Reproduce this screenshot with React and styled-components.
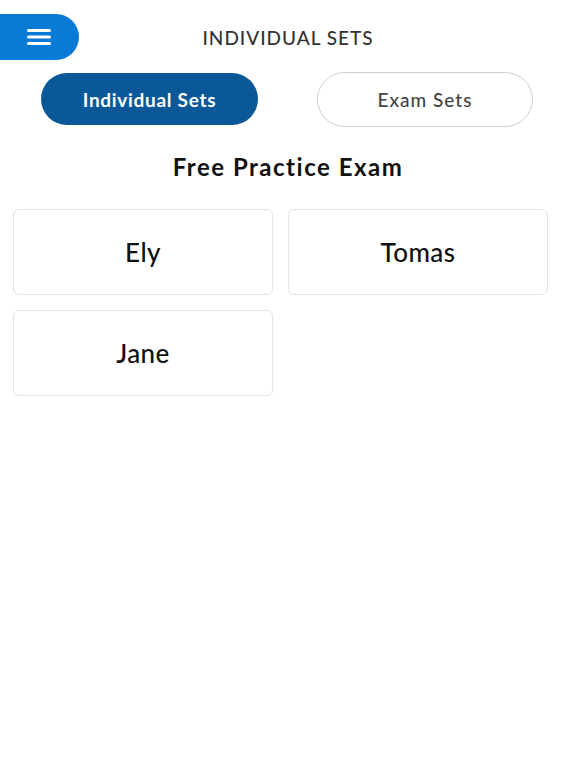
import React from "react";
import styled, { createGlobalStyle } from "styled-components";

const GlobalStyle = createGlobalStyle`
  html, body { margin: 0; padding: 0; background: #ffffff; }
  body { font-family: Lato, "Noto Sans", "Liberation Sans", sans-serif; -webkit-font-smoothing: antialiased; }
  * { box-sizing: border-box; }
`;

const Page = styled.div`
  width: 576px;
  min-height: 768px;
  background: #fff;
  display: flex;
  flex-direction: column;
`;

const TopBar = styled.header`
  display: grid;
  grid-template-columns: 79px 1fr 79px;
  align-items: center;
  padding-top: 14px;
  height: 60px;
`;

const MenuButton = styled.button`
  width: 79px;
  height: 46px;
  border: none;
  padding: 0 2px 0 0;
  background: #0a7ad7;
  border-radius: 0 23px 23px 0;
  display: flex;
  align-items: center;
  justify-content: center;
  cursor: pointer;
`;

const Title = styled.h1`
  margin: 0;
  text-align: center;
  font-size: 19px;
  font-weight: 500;
  letter-spacing: 1px;
  color: #333333;
`;

const Tabs = styled.nav`
  display: flex;
  justify-content: space-between;
  padding: 12px 43px 0 41px;
`;

const Tab = styled.button`
  width: ${(p) => (p.$active ? "217px" : "216px")};
  height: ${(p) => (p.$active ? "52px" : "55px")};
  margin-top: ${(p) => (p.$active ? "1px" : "0")};
  border-radius: 28px;
  border: ${(p) => (p.$active ? "none" : "1px solid #cfcfcf")};
  background: ${(p) => (p.$active ? "#0b5898" : "#ffffff")};
  color: ${(p) => (p.$active ? "#ffffff" : "#444444")};
  font-family: Lato, "Noto Sans", sans-serif;
  font-size: 19px;
  letter-spacing: ${(p) => (p.$active ? "0.7px" : "1px")};
  font-weight: ${(p) => (p.$active ? 700 : 500)};
  cursor: pointer;
`;

const SectionTitle = styled.h2`
  margin: 26px 0 0;
  text-align: center;
  font-size: 24px;
  font-weight: 700;
  letter-spacing: 1.5px;
  color: #111111;
  line-height: 28px;
`;

const Grid = styled.div`
  display: grid;
  grid-template-columns: 260px 260px;
  column-gap: 15px;
  row-gap: 15px;
  padding: 28px 0 0 13px;
`;

const Card = styled.button`
  height: 86px;
  border: 1px solid #e3e3e3;
  border-radius: 6px;
  background: #ffffff;
  font-family: Lato, "Noto Sans", sans-serif;
  font-size: 26px;
  font-weight: 500;
  letter-spacing: 0.4px;
  color: #111111;
  cursor: pointer;
`;

const HamburgerIcon = () => (
  <svg width="24" height="18" viewBox="0 0 24 18" aria-hidden="true">
    <rect x="0" y="1" width="24" height="3" rx="1.5" fill="#fff" />
    <rect x="0" y="7.5" width="24" height="3" rx="1.5" fill="#fff" />
    <rect x="0" y="14" width="24" height="3" rx="1.5" fill="#fff" />
  </svg>
);

const people = ["Ely", "Tomas", "Jane"];

export default function App() {
  return (
    <>
      <GlobalStyle />
      <Page>
        <TopBar>
          <MenuButton aria-label="Menu">
            <HamburgerIcon />
          </MenuButton>
          <Title>INDIVIDUAL SETS</Title>
          <span />
        </TopBar>
        <Tabs>
          <Tab $active>Individual Sets</Tab>
          <Tab>Exam Sets</Tab>
        </Tabs>
        <SectionTitle>Free Practice Exam</SectionTitle>
        <Grid>
          {people.map((name) => (
            <Card key={name}>{name}</Card>
          ))}
        </Grid>
      </Page>
    </>
  );
}
